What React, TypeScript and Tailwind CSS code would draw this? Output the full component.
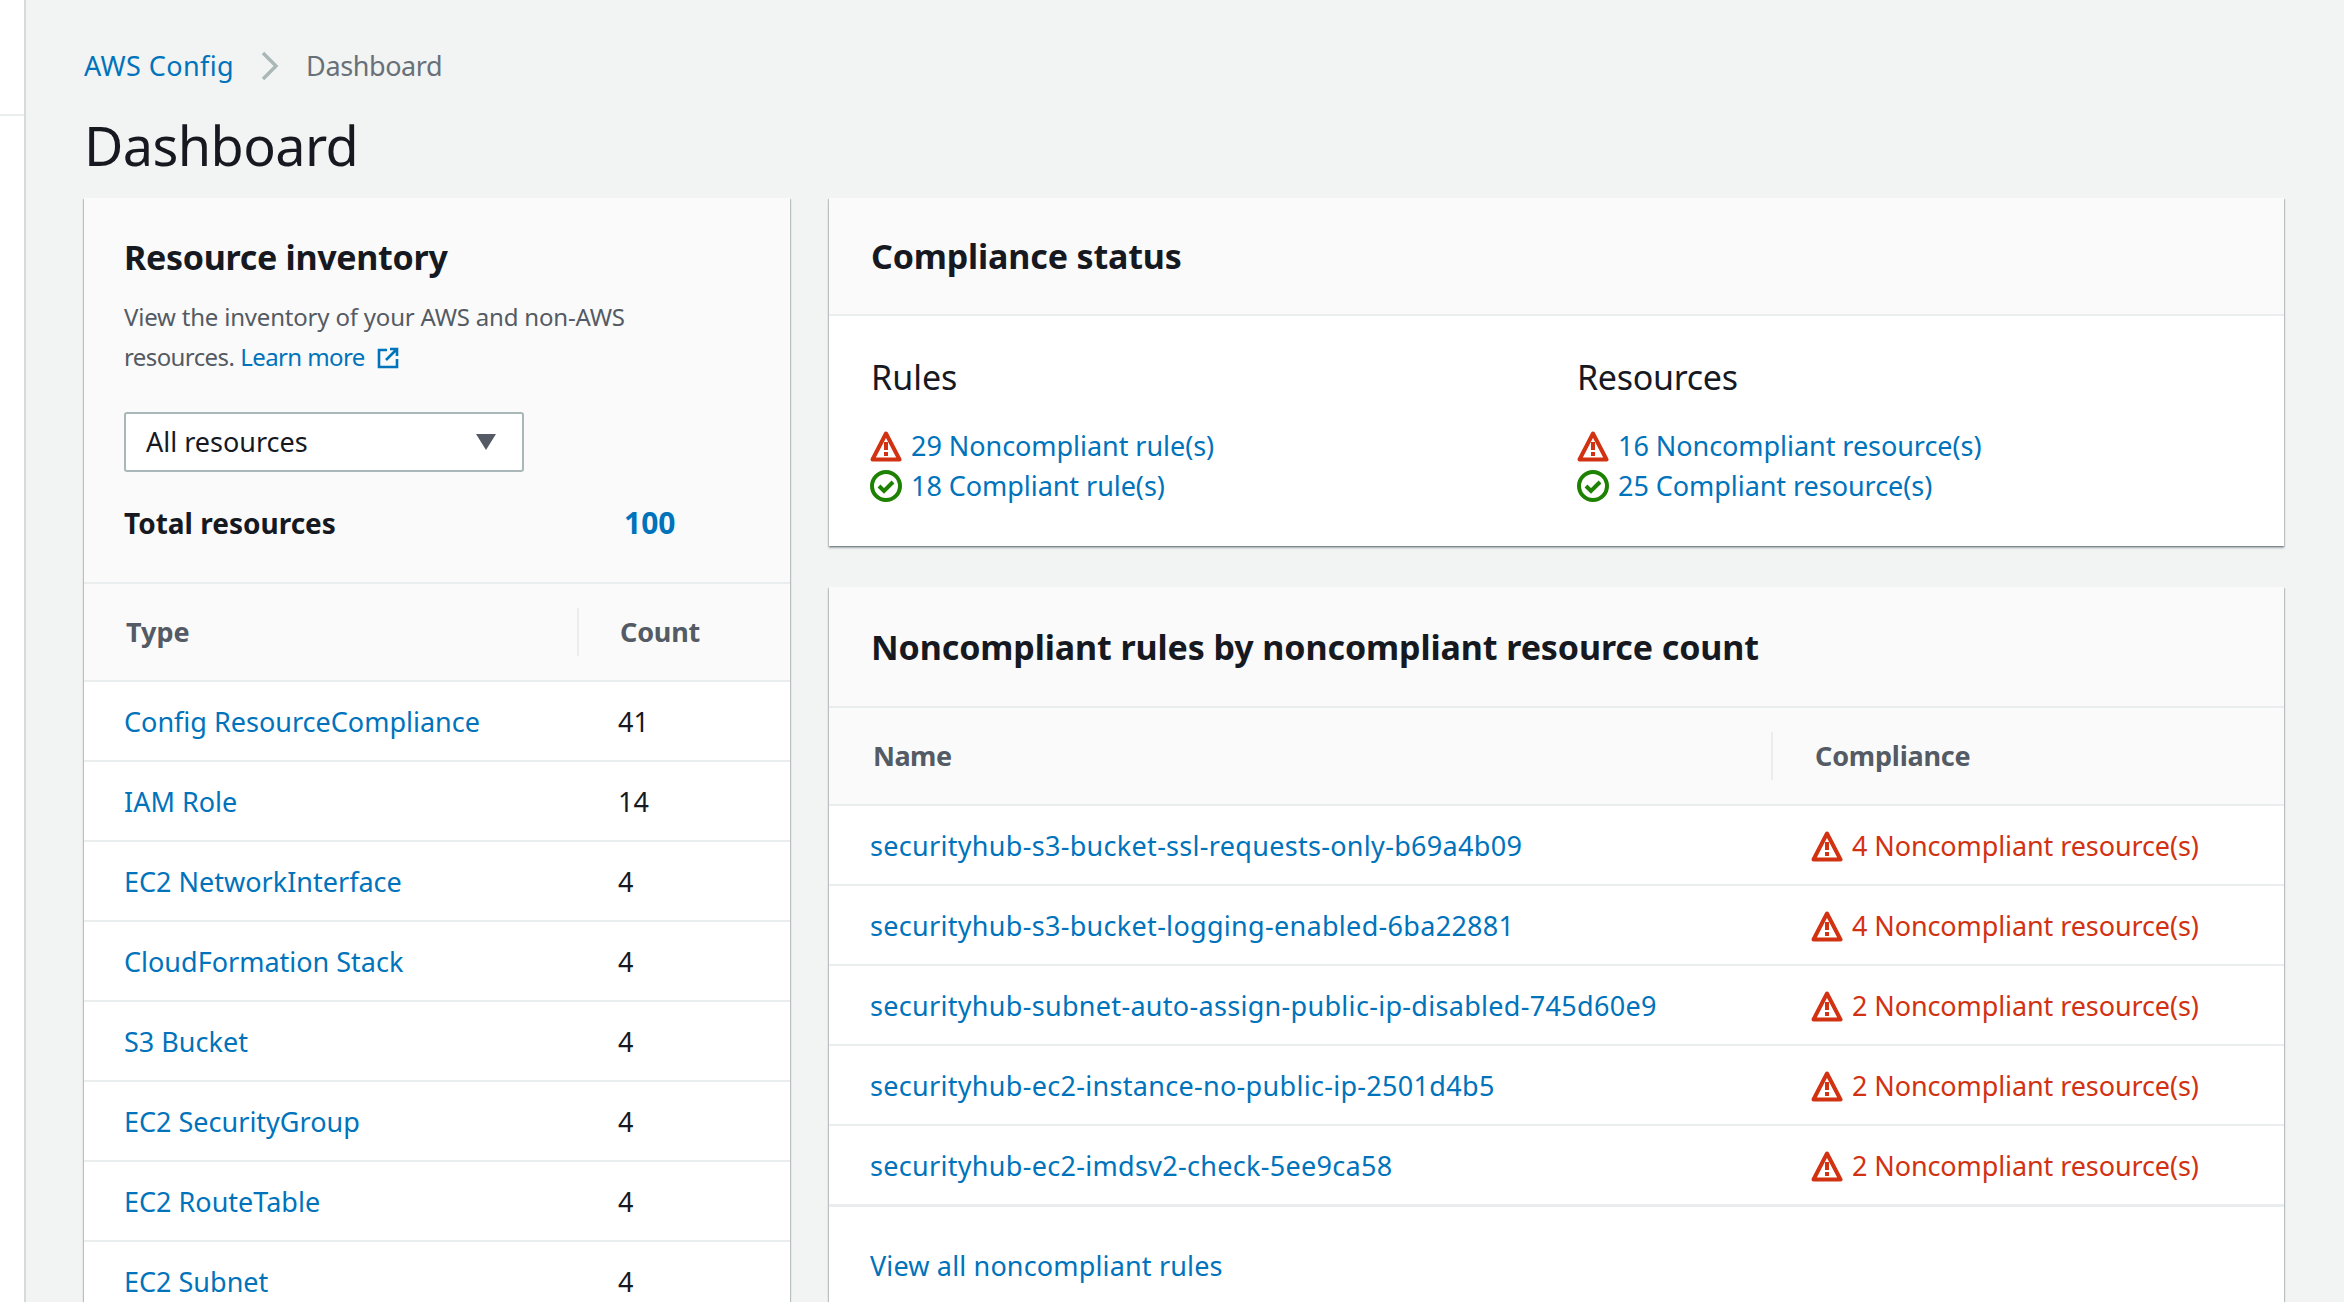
import React from 'react';

const inventory = [
  ['Config ResourceCompliance', '41'],
  ['IAM Role', '14'],
  ['EC2 NetworkInterface', '4'],
  ['CloudFormation Stack', '4'],
  ['S3 Bucket', '4'],
  ['EC2 SecurityGroup', '4'],
  ['EC2 RouteTable', '4'],
  ['EC2 Subnet', '4'],
];

const rules = [
  ['securityhub-s3-bucket-ssl-requests-only-b69a4b09', '4 Noncompliant resource(s)'],
  ['securityhub-s3-bucket-logging-enabled-6ba22881', '4 Noncompliant resource(s)'],
  ['securityhub-subnet-auto-assign-public-ip-disabled-745d60e9', '2 Noncompliant resource(s)'],
  ['securityhub-ec2-instance-no-public-ip-2501d4b5', '2 Noncompliant resource(s)'],
  ['securityhub-ec2-imdsv2-check-5ee9ca58', '2 Noncompliant resource(s)'],
];

const cardShadow = 'shadow-[0_2px_2px_0_rgba(0,28,36,0.3),1px_1px_1px_0_rgba(0,28,36,0.15),-1px_1px_1px_0_rgba(0,28,36,0.15)]';

const WarnIcon: React.FC = () => (
  <svg viewBox="0 0 32 32" className="w-8 h-8 shrink-0" fill="none">
    <path d="M16 3.5 L29.5 29.5 H2.5 Z" stroke="#d13212" strokeWidth="4" strokeLinejoin="round" />
    <path d="M16 12v8M16 22v4" stroke="#d13212" strokeWidth="4" />
  </svg>
);

const OkIcon: React.FC = () => (
  <svg viewBox="0 0 32 32" className="w-8 h-8 shrink-0" fill="none">
    <circle cx="16" cy="16" r="14" stroke="#1d8102" strokeWidth="4" />
    <path d="M9 16l5 5 9-9" stroke="#1d8102" strokeWidth="4" />
  </svg>
);

const StatusLink: React.FC<{ ok?: boolean; children: React.ReactNode }> = ({ ok, children }) => (
  <div className="flex items-center gap-[9px] h-10 -ml-px">
    {ok ? <OkIcon /> : <WarnIcon />}
    <a className="text-[#0073bb] tracking-[-0.05px]">{children}</a>
  </div>
);

const ResourceInventory: React.FC = () => (
  <section className={`w-[706px] shrink-0 bg-white ${cardShadow}`}>
    <div className="bg-[#fafafa] px-[40px] pt-[37px] pb-[39px]">
      <h2 className="text-[34px] tracking-[-0.3px] leading-[44px] font-bold text-[#16191f]">Resource inventory</h2>
      <p className="mt-[18px] text-[#545b64] text-[24px] tracking-[-0.2px] leading-10">
        View the inventory of your AWS and non-AWS
        <br />
        <span className="tracking-[-0.6px]">resources.</span> <a className="text-[#0073bb] tracking-[-0.6px]">Learn more</a>
        <svg viewBox="0 0 22 22" className="inline-block w-[22px] h-[22px] ml-3 align-[-3px]" fill="none">
          <path d="M20 12v8H2V3h8M13 2h7v7M20 2L9 13" stroke="#0073bb" strokeWidth="2.6" />
        </svg>
      </p>
      <div className="mt-[35px] w-[400px] h-[60px] bg-white border-2 border-[#aab7b8] rounded-[3px] flex items-center justify-between pl-[20px] pr-[26px] text-[#16191f]">
        <span>All resources</span>
        <svg viewBox="0 0 20 16" className="w-5 h-4">
          <path d="M0 0h20L10 16z" fill="#545b64" />
        </svg>
      </div>
      <div className="mt-[31px] flex items-center h-10">
        <span className="w-[500px] font-bold text-[28px] text-[#16191f]">Total resources</span>
        <a className="font-bold text-[#0073bb] text-[30px]">100</a>
      </div>
    </div>
    <div className="bg-[#fafafa] border-t-2 border-[#eaeded] h-[98px] flex items-center font-bold text-[#545b64]">
      <div className="w-[495px] pl-[42px] h-12 flex items-center border-r-2 border-[#eaeded]">Type</div>
      <div className="pl-[41px] tracking-[-0.2px]">Count</div>
    </div>
    {inventory.map(([name, count]) => (
      <div key={name} className="border-t-2 border-[#eaeded] h-[80px] pt-[2px] flex items-center">
        <a className="w-[534px] pl-[40px] text-[#0073bb]">{name}</a>
        <span className="text-[#16191f]">{count}</span>
      </div>
    ))}
  </section>
);

const ComplianceStatus: React.FC = () => (
  <section className={`bg-white ${cardShadow}`}>
    <div className="bg-[#fafafa] h-[118px] flex items-center px-[42px] border-b-2 border-[#eaeded]">
      <h2 className="text-[34px] tracking-[-0.15px] font-bold text-[#16191f]">Compliance status</h2>
    </div>
    <div className="flex px-[42px] pt-[39px] h-[230px]">
      <div className="w-[706px]">
        <h3 className="text-[34px] leading-[44px] text-[#16191f]">Rules</h3>
        <div className="mt-[27px]">
          <StatusLink>29 Noncompliant rule(s)</StatusLink>
          <StatusLink ok>18 Compliant rule(s)</StatusLink>
        </div>
      </div>
      <div>
        <h3 className="text-[34px] tracking-[-0.3px] leading-[44px] text-[#16191f]">Resources</h3>
        <div className="mt-[27px] ml-px">
          <StatusLink>16 Noncompliant resource(s)</StatusLink>
          <StatusLink ok>25 Compliant resource(s)</StatusLink>
        </div>
      </div>
    </div>
  </section>
);

const NoncompliantRules: React.FC = () => (
  <section className={`mt-[41px] bg-white ${cardShadow}`}>
    <div className="bg-[#fafafa] h-[119px] flex items-center px-[42px]">
      <h2 className="text-[34px] tracking-[-0.1px] font-bold text-[#16191f]">Noncompliant rules by noncompliant resource count</h2>
    </div>
    <div className="bg-[#fafafa] border-t-2 border-[#eaeded] h-[98px] flex items-center font-bold text-[#545b64]">
      <div className="w-[944px] pl-[44px] h-12 flex items-center border-r-2 border-[#eaeded] tracking-[-0.5px]">Name</div>
      <div className="pl-[42px] tracking-[-0.2px]">Compliance</div>
    </div>
    {rules.map(([name, status]) => (
      <div key={name} className="border-t-2 border-[#eaeded] h-[80px] pt-[2px] flex items-center">
        <a className="w-[982px] pl-[41px] text-[#0073bb] tracking-[0.3px]">{name}</a>
        <span className="flex items-center gap-[9px] text-[#d13212] tracking-[-0.1px]">
          <WarnIcon />
          {status}
        </span>
      </div>
    ))}
    <div className="border-t-[3px] border-[#eaeded] h-[120px] pt-[39px] px-[41px]">
      <a className="text-[#0073bb] tracking-[0.15px]">View all noncompliant rules</a>
    </div>
  </section>
);

const App: React.FC = () => {
  return (
    <div className="flex h-screen overflow-hidden bg-[#f2f3f3] font-['Noto_Sans',sans-serif] text-[27px] leading-10">
      <aside className="w-[26px] shrink-0 bg-white border-r-2 border-[#d5dbdb]">
        <div className="mt-[114px] border-t-2 border-[#eaeded]" />
      </aside>
      <main className="flex-1 pl-[58px] pr-[60px] pt-[46px]">
        <nav className="flex items-center h-10">
          <a className="text-[#0073bb] tracking-[0.4px]">AWS Config</a>
          <svg viewBox="0 0 18 30" className="w-[18px] h-[30px] ml-[27px] mr-[27px]">
            <path d="M2 2l13 13L2 28" fill="none" stroke="#aab7b8" strokeWidth="3.4" />
          </svg>
          <span className="text-[#687078] tracking-[-0.4px]">Dashboard</span>
        </nav>
        <h1 className="mt-[24px] text-[54px] tracking-[-0.6px] leading-[70px] text-[#16191f]">Dashboard</h1>
        <div className="mt-[18px] flex gap-[39px] items-start">
          <ResourceInventory />
          <div className="flex-1">
            <ComplianceStatus />
            <NoncompliantRules />
          </div>
        </div>
      </main>
    </div>
  );
};

export default App;
